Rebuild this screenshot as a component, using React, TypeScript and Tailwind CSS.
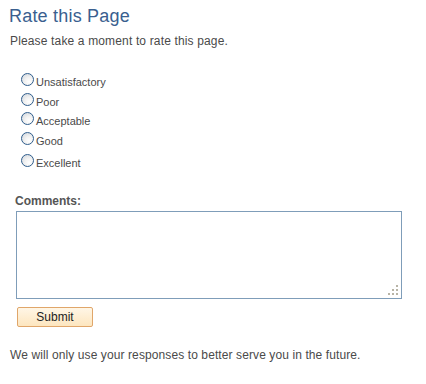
import React, { useState } from 'react';

const options = ['Unsatisfactory', 'Poor', 'Acceptable', 'Good', 'Excellent'];
// gap above each row, in px, as in the original page
const rowGaps = ['mt-[24px]', 'mt-[7px]', 'mt-[6px]', 'mt-[7px]', 'mt-[9px]'];

const Radio: React.FC<{ checked: boolean }> = ({ checked }) => (
  <span className="relative block w-[13px] h-[13px] shrink-0 rounded-full border border-[#2f5d8c] bg-[radial-gradient(circle_at_65%_70%,#ffffff_0%,#f2f2f2_40%,#cdd3da_100%)]">
    {checked && <span className="absolute left-[3px] top-[3px] w-[5px] h-[5px] rounded-full bg-[#21a121]" />}
  </span>
);

const App: React.FC = () => {
  const [rating, setRating] = useState('');
  const [comments, setComments] = useState('');

  return (
    <div
      className="w-[426px] h-[384px] bg-white flex flex-col text-[12px] text-[#4a4a4a]"
      style={{ fontFamily: '"Liberation Sans", Arial, sans-serif' }}
    >
      <h1 className="ml-[9px] mt-[5px] text-[18px] leading-[22px] tracking-[0.2px] text-[#3a5f8f] font-normal">Rate this Page</h1>
      <p className="ml-[10px] mt-[6px] leading-[16px] tracking-[0.15px]">Please take a moment to rate this page.</p>

      <div className="flex flex-col">
        {options.map((opt, i) => (
          <label
            key={opt}
            className={`flex items-start ml-[21px] h-[13px] cursor-pointer ${rowGaps[i]}`}
            onClick={() => setRating(opt)}
          >
            <Radio checked={rating === opt} />
            <span className="ml-[2px] mt-[3px] text-[11px] leading-[13px] text-[#4a4a4a]">{opt}</span>
          </label>
        ))}
      </div>

      <div className="ml-[15px] mt-[27px] font-bold leading-[14px] text-[#555555]">Comments:</div>

      <div className="relative ml-[16px] mt-[3px] w-[386px] h-[88px]">
        <textarea
          value={comments}
          onChange={(e) => setComments(e.target.value)}
          className="block w-full h-full resize-none border border-[#7f9db9] bg-white outline-none px-[2px] py-[1px] text-[12px] text-[#333]"
        />
        <svg className="absolute right-[4px] bottom-[4px]" width="10" height="10" viewBox="0 0 10 10">
          <rect x="8" y="0" width="2" height="2" fill="#b8b4a6" />
          <rect x="4" y="4" width="2" height="2" fill="#b8b4a6" />
          <rect x="8" y="4" width="2" height="2" fill="#b8b4a6" />
          <rect x="0" y="8" width="2" height="2" fill="#b8b4a6" />
          <rect x="4" y="8" width="2" height="2" fill="#b8b4a6" />
          <rect x="8" y="8" width="2" height="2" fill="#b8b4a6" />
        </svg>
      </div>

      <div className="ml-[17px] mt-[8px]">
        <button
          type="button"
          className="w-[76px] h-[20px] border border-[#e0a66a] rounded-[2px] bg-[linear-gradient(#fff6e6,#fde6bf)] text-[12px] leading-[18px] text-[#222]"
        >
          Submit
        </button>
      </div>

      <p className="ml-[10px] mt-[20px] leading-[16px] tracking-[0.1px]">
        We will only use your responses to better serve you in the future.
      </p>
    </div>
  );
};

export default App;
